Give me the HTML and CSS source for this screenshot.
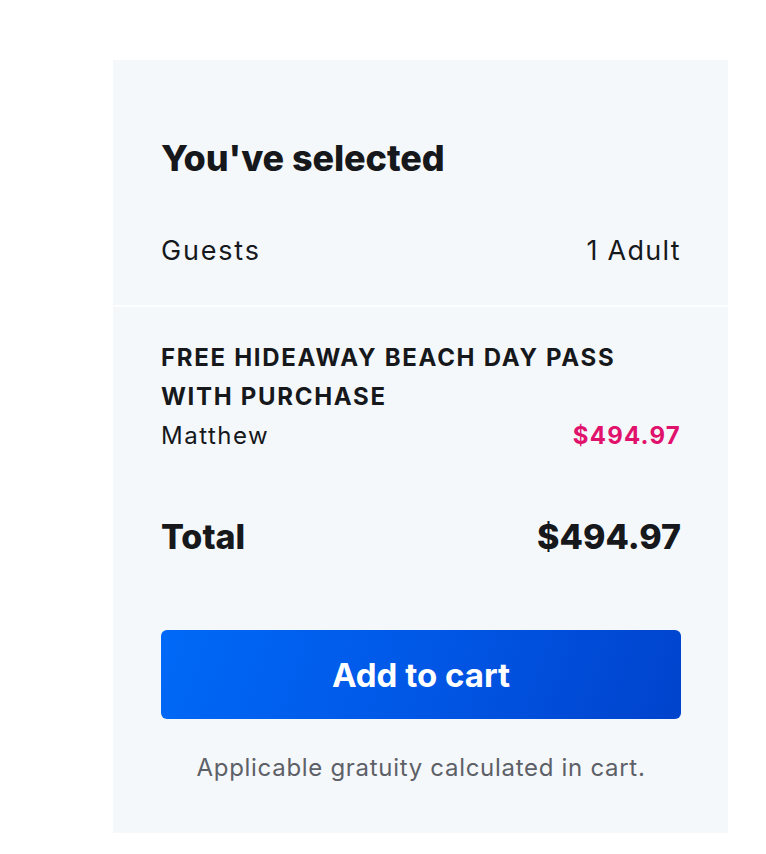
FILE: index.html
```html
<!DOCTYPE html>
<html>
<head>
<meta charset="utf-8">
<link rel="stylesheet" href="styles.css">
</head>
<body>
<div class="panel">
  <section class="summary">
    <h2 class="heading">You've selected</h2>
    <div class="row guests">
      <span>Guests</span>
      <span>1 Adult</span>
    </div>
  </section>
  <section class="details">
    <div class="item-title">FREE HIDEAWAY BEACH DAY PASS WITH PURCHASE</div>
    <div class="row item">
      <span>Matthew</span>
      <span class="price">$494.97</span>
    </div>
    <div class="row total">
      <span>Total</span>
      <span>$494.97</span>
    </div>
    <button class="cart-btn">Add to cart</button>
    <p class="note">Applicable gratuity calculated in cart.</p>
  </section>
</div>
</body>
</html>
```
FILE: styles.css
```css
* { box-sizing: border-box; }
body {
  margin: 0;
  background: #ffffff;
  font-family: Inter, "Open Sans", sans-serif;
  color: #16181b;
}
.panel {
  width: 615px;
  margin: 60px 0 0 113px;
  background: #f5f8fb;
}
.summary {
  padding: 78px 47px 38px 48px;
  border-bottom: 2px solid #fcfdfe;
}
.heading {
  margin: 0;
  font-size: 36px;
  line-height: 40px;
  font-weight: 800;
  letter-spacing: -0.1px;
}
.row {
  display: flex;
  justify-content: space-between;
  align-items: center;
}
.guests {
  margin-top: 57px;
  font-size: 27px;
  line-height: 32px;
}
.guests span:first-child {
  letter-spacing: 1.8px;
}
.guests span:last-child {
  letter-spacing: 1.3px;
}
.details {
  padding: 31px 47px 50px 48px;
}
.item-title {
  font-size: 24px;
  line-height: 39px;
  font-weight: 700;
  letter-spacing: 1.7px;
  max-width: 505px;
}
.item {
  font-size: 24px;
  line-height: 39px;
  letter-spacing: 1.5px;
}
.price {
  color: #e0126c;
  font-weight: 700;
  letter-spacing: 1.2px;
}
.total {
  margin-top: 62px;
  font-size: 34px;
  line-height: 40px;
  font-weight: 800;
}
.cart-btn {
  display: block;
  width: 100%;
  height: 89px;
  margin-top: 73px;
  border: none;
  border-radius: 6px;
  background: linear-gradient(110deg, #0069f7 0%, #0157e6 50%, #0043cc 100%);
  color: #ffffff;
  font-family: inherit;
  font-size: 33px;
  font-weight: 700;
}
.note {
  margin: 34px 0 0;
  text-align: center;
  font-size: 24px;
  line-height: 30px;
  letter-spacing: 0.7px;
  color: #5d6167;
}
```
